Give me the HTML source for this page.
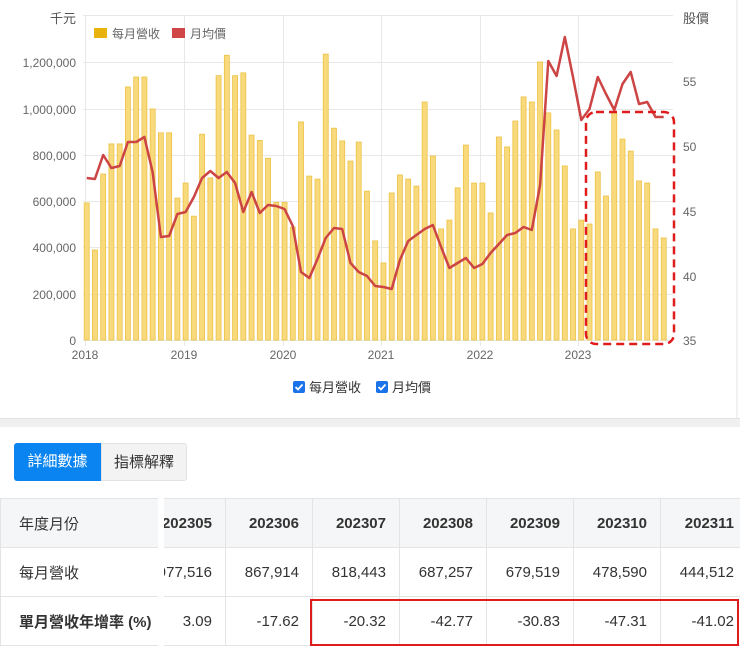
<!DOCTYPE html>
<html><head><meta charset="utf-8"><style>
body{margin:0;width:740px;height:646px;overflow:hidden;background:#fff;font-family:"Liberation Sans","Noto Sans CJK TC",sans-serif;color:#333}
#chart{position:absolute;left:0;top:0}
.sep{position:absolute;left:0;top:418px;width:740px;height:8px;background:#f0f0f0;border-top:1px solid #e2e2e2}
.btn{position:absolute;top:443px;height:38px;line-height:38px;font-size:15px;text-align:center}
table{position:absolute;left:0;top:498px;border-collapse:collapse;font-size:15px;table-layout:fixed;width:747px}
td{height:49px;border:1px solid #e4e4e4;padding:0 13px;text-align:right;white-space:nowrap;overflow:hidden;box-sizing:border-box}
tr.h td{background:#f5f6f7;font-weight:bold}
td.f{text-align:left;padding-left:18px;font-weight:normal!important;border-right:6px solid #fff}
td.c{direction:rtl;padding-right:13px}
.rb{position:absolute;left:310px;top:599px;width:425px;height:43px;border:2px solid #e01b1b}
</style></head><body>
<svg id="chart" width="740" height="418" font-family="Liberation Sans,Noto Sans CJK TC,sans-serif">
<g stroke="#e8e8e8" stroke-width="1" id="grid"></g>
<text x="50" y="23" font-size="13" fill="#555">千元</text>
<text x="683" y="23" font-size="13" fill="#555">股價</text>
<rect x="94" y="28" width="13" height="10" fill="#e8b30d"/><text x="112" y="38" font-size="12" fill="#666">每月營收</text>
<rect x="172" y="28" width="13" height="10" fill="#d04545"/><text x="190" y="38" font-size="12" fill="#666">月均價</text>
<g font-size="12" fill="#666" text-anchor="end">
<text x="76" y="67">1,200,000</text><text x="76" y="114">1,000,000</text><text x="76" y="160">800,000</text><text x="76" y="206">600,000</text><text x="76" y="252">400,000</text><text x="76" y="299">200,000</text><text x="76" y="345">0</text></g>
<g font-size="12" fill="#666"><text x="683" y="86">55</text><text x="683" y="151">50</text><text x="683" y="216">45</text><text x="683" y="281">40</text><text x="683" y="345">35</text></g>
<g font-size="12" fill="#666" text-anchor="middle"><text x="85" y="359">2018</text><text x="184" y="359">2019</text><text x="283" y="359">2020</text><text x="381" y="359">2021</text><text x="480" y="359">2022</text><text x="578" y="359">2023</text></g>
<g id="bars"></g>
<polyline id="line" fill="none" stroke="#cc4444" stroke-width="2.5" stroke-linejoin="round"/>
<rect x="586" y="112" width="88" height="232" rx="10" fill="none" stroke="#e01b1b" stroke-width="2.5" stroke-dasharray="8,5"/>
<rect x="293" y="381" width="12" height="12" rx="2" fill="#1a73e8"/><path d="M295.5 387l2.5 2.5 4.5-5" stroke="#fff" stroke-width="1.8" fill="none"/>
<text x="309" y="392" font-size="13" fill="#333">每月營收</text>
<rect x="376" y="381" width="12" height="12" rx="2" fill="#1a73e8"/><path d="M378.5 387l2.5 2.5 4.5-5" stroke="#fff" stroke-width="1.8" fill="none"/>
<text x="392" y="392" font-size="13" fill="#333">月均價</text>
<line x1="737" y1="0" x2="737" y2="418" stroke="#e6e6e6"/>
</svg>
<div class="sep"></div>
<div class="btn" style="left:14px;width:87px;background:#0a84f0;color:#fff;border-radius:3px 0 0 3px">詳細數據</div>
<div class="btn" style="left:101px;width:84px;background:#f3f3f3;color:#333;border:1px solid #e2e2e2;height:36px;border-radius:0 3px 3px 0">指標解釋</div>
<table>
<colgroup><col style="width:160px"><col style="width:65px"><col style="width:87px"><col style="width:87px"><col style="width:87px"><col style="width:87px"><col style="width:87px"><col style="width:87px"></colgroup>
<tr class="h"><td class="f">年度月份</td><td class="c">202305</td><td>202306</td><td>202307</td><td>202308</td><td>202309</td><td>202310</td><td>202311</td></tr>
<tr><td class="f">每月營收</td><td class="c">977,516</td><td>867,914</td><td>818,443</td><td>687,257</td><td>679,519</td><td>478,590</td><td>444,512</td></tr>
<tr><td class="f" style="font-weight:bold!important">單月營收年增率 (%)</td><td>3.09</td><td>-17.62</td><td>-20.32</td><td>-42.77</td><td>-30.83</td><td>-47.31</td><td>-41.02</td></tr>
</table>
<div class="rb"></div>
<script>
var v=[592,389,717,847,847,1093,1136,1136,998,895,895,613,678,535,889,700,1142,1230,1142,1154,885,862,785,595,595,488,942,708,695,1235,915,860,773,855,643,428,333,635,713,695,665,1028,795,480,518,657,842,678,678,549,877,834,946,1050,1028,1201,981,907,752,480,518,501,726,622,981,868,816,687,678,480,441];
var p=[178,179,155,168,166,142,142,137,172,237,236,214,212,197,178,171,178,172,183,212,192,213,205,206,209,226,272,278,259,238,228,229,263,272,276,286,287,289,260,241,235,229,225,247,268,263,258,268,264,253,244,235,233,227,230,185,61,76,37,77,120,109,77,94,110,84,72,104,102,117,117];
var ns="http://www.w3.org/2000/svg",b=document.getElementById("bars"),g=document.getElementById("grid"),pts=[];
[15,62,109,155,201,247,294,340].forEach(function(y){var l=document.createElementNS(ns,"line");l.setAttribute("x1",83);l.setAttribute("x2",673);l.setAttribute("y1",y+.5);l.setAttribute("y2",y+.5);g.appendChild(l);});
[85,184,283,381,480,578].forEach(function(x){var l=document.createElementNS(ns,"line");l.setAttribute("x1",x+.5);l.setAttribute("x2",x+.5);l.setAttribute("y1",15);l.setAttribute("y2",346);g.appendChild(l);});
for(var i=0;i<v.length;i++){var x=86.7+i*8.243,h=v[i]/200*46.3;var r=document.createElementNS(ns,"rect");r.setAttribute("x",x-2.5);r.setAttribute("y",340-h);r.setAttribute("width",5);r.setAttribute("height",h);r.setAttribute("fill","#f8da7c");r.setAttribute("stroke","#ecc246");r.setAttribute("stroke-width","0.8");b.appendChild(r);pts.push(x.toFixed(1)+","+p[i]);}
document.getElementById("line").setAttribute("points",pts.join(" "));
</script>
</body></html>
